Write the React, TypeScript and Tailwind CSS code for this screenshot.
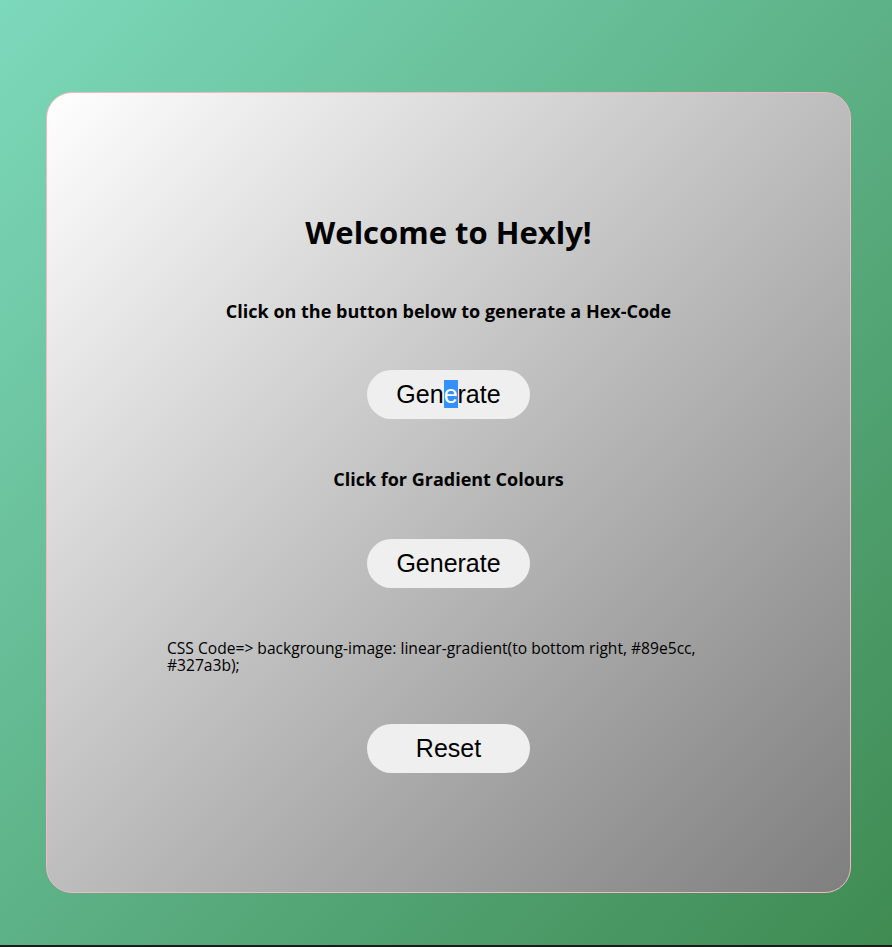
export default function App() {
  const body = { fontFamily: '"Open Sans", sans-serif' };
  const btn =
    'w-[163px] h-[49px] rounded-full bg-[#efefef] text-[25px] text-black flex items-center justify-center';
  const arial = { fontFamily: '"Liberation Sans", Arial, sans-serif' };

  return (
    <div className="w-full" style={body}>
      <div className="min-h-[945px] bg-gradient-to-br from-[#7dd9bc] to-[#3f8b52] flex pl-[46px] pt-[92px]">
        <div className="w-[805px] h-[801px] rounded-[26px] border border-[#f4b8c4] bg-gradient-to-br from-white to-[#7f7f7f] flex flex-col items-center pt-[119px]">
          <h1 className="text-[31px] leading-[40px] font-bold text-black">Welcome to Hexly!</h1>
          <p className="mt-[47px] text-[18px] leading-[24px] font-bold text-black">
            Click on the button below to generate a Hex-Code
          </p>
          <button className={`mt-[47px] ${btn}`} style={arial}>
            <span>
              Gen<span className="bg-[#3390ff] text-white">e</span>rate
            </span>
          </button>
          <p className="mt-[48px] text-[18px] leading-[24px] font-bold text-black">Click for Gradient Colours</p>
          <button className={`mt-[48px] ${btn}`} style={arial}>
            Generate
          </button>
          <p className="mt-[52px] w-[563px] text-[15.6px] leading-[17px] text-black">
            CSS Code=&gt; backgroung-image: linear-gradient(to bottom right, #89e5cc, #327a3b);
          </p>
          <button className={`mt-[50px] ${btn}`} style={arial}>
            Reset
          </button>
        </div>
      </div>
      <div className="h-[2px] bg-[#1c1c1c]" />
    </div>
  );
}
